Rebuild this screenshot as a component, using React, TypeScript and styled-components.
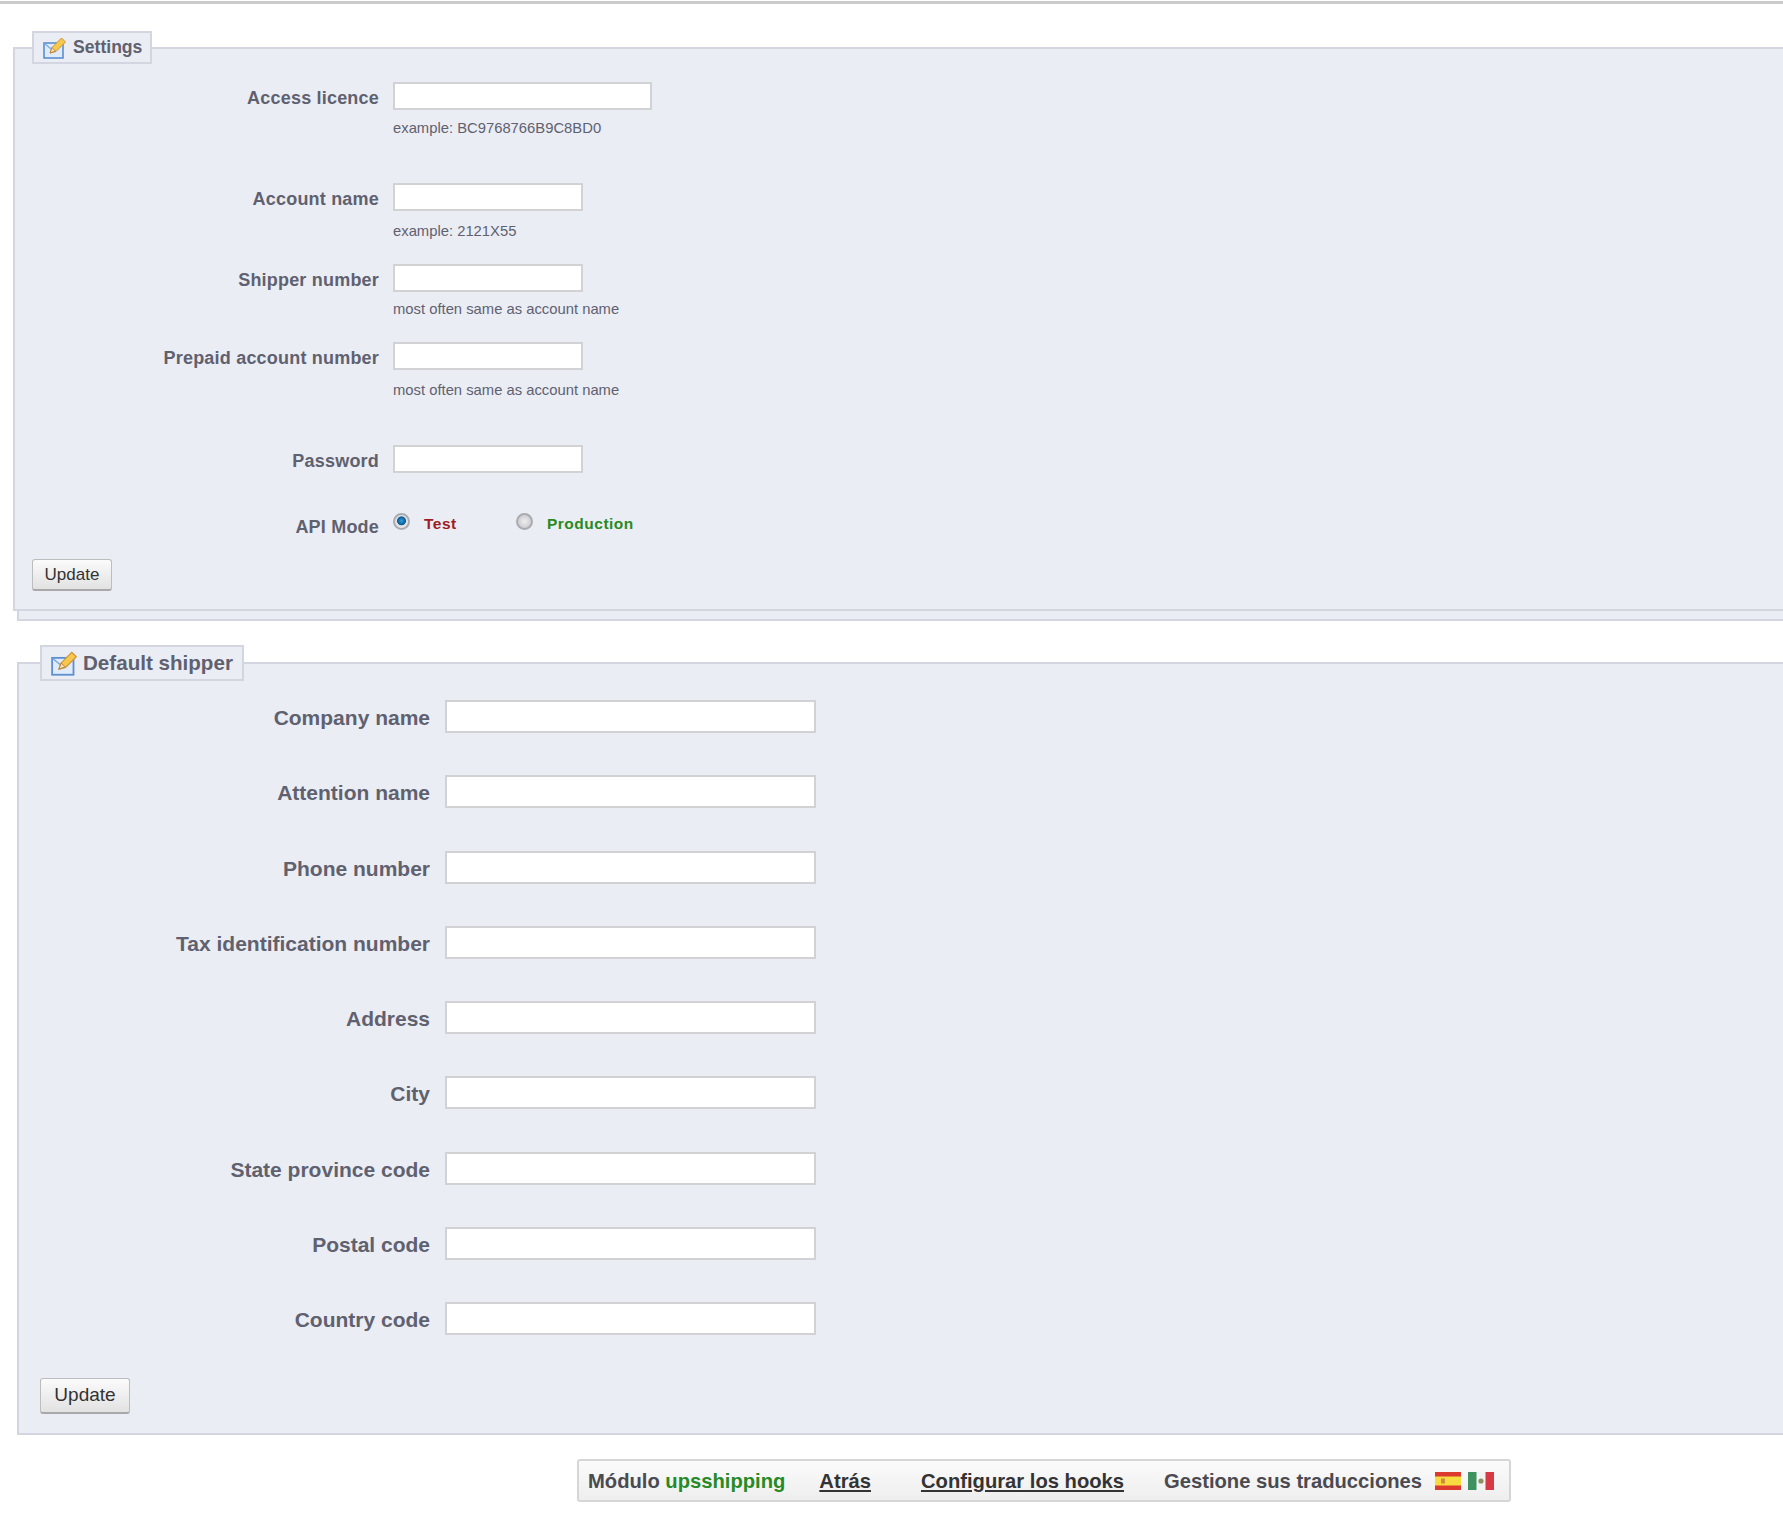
import React from 'react';
import styled, { createGlobalStyle } from 'styled-components';

const GlobalStyle = createGlobalStyle`
  html, body {
    margin: 0;
    padding: 0;
    background: #fff;
    overflow-x: hidden;
  }
  body {
    font-family: "Liberation Sans", Arial, sans-serif;
    color: #5f616f;
  }
`;

const Page = styled.div`
  width: 1783px;
  height: 1514px;
  overflow: hidden;
  border-top: 3px solid #cbcbcb;
  margin-top: 1px;
  box-sizing: border-box;
  padding-top: 27px;
`;

const Backing = styled.div`
  display: flow-root;
  margin: 16px -20px 0 17px;
  background: #ebedf5;
  border-left: 2px solid #d3d6e0;
  border-bottom: 2px solid #d3d6e0;
  height: 574px;
  box-sizing: border-box;
`;

const Fieldset = styled.fieldset<{ $shift?: boolean; $pad: number; $top: number; $height: number }>`
  margin: ${(p) => (p.$shift ? '-16px 0 0 -6px' : 0)};
  padding: ${(p) => p.$top}px 0 0 ${(p) => p.$pad}px;
  min-width: 0;
  height: ${(p) => p.$height}px;
  box-sizing: border-box;
  background: #ebedf5;
  border: 2px solid #d3d6e0;
  border-right: none;
`;

const Legend = styled.legend<{ $big?: boolean }>`
  display: flex;
  align-items: center;
  box-sizing: border-box;
  height: ${(p) => (p.$big ? 36 : 33)}px;
  padding: 0 ${(p) => (p.$big ? 9 : 8)}px 0 9px;
  gap: ${(p) => (p.$big ? 5 : 6)}px;
  background: #ebedf5;
  border: 2px solid #d3d6e0;
  font-size: ${(p) => (p.$big ? 20.6 : 17.6)}px;
  font-weight: bold;
  color: #5f616f;
`;

const Row = styled.div<{ $height: number; $label: number; $gap: number }>`
  display: grid;
  grid-template-columns: ${(p) => p.$label}px 1fr;
  column-gap: ${(p) => p.$gap}px;
  height: ${(p) => p.$height}px;
`;

const Label = styled.label<{ $big?: boolean; $low?: boolean }>`
  text-align: right;
  font-size: ${(p) => (p.$big ? 21 : 18)}px;
  font-weight: bold;
  letter-spacing: ${(p) => (p.$big ? 0 : 0.2)}px;
  line-height: ${(p) => (p.$big ? 36 : p.$low ? 37 : 32)}px;
  color: #5f616f;
  white-space: nowrap;
`;

const TextInput = styled.input<{ $width: number; $big?: boolean }>`
  display: block;
  box-sizing: border-box;
  width: ${(p) => p.$width}px;
  height: ${(p) => (p.$big ? 33 : 28)}px;
  background: #fff;
  border: 2px solid #d2d2d4;
  padding: 0 4px;
  outline: none;
`;

const Hint = styled.div<{ $gap: number }>`
  margin-top: ${(p) => p.$gap}px;
  font-size: 14.8px;
  line-height: 16px;
  color: #5f616f;
  white-space: nowrap;
`;

const RadioGroup = styled.div`
  display: flex;
  align-items: flex-start;
  padding-top: 4px;
`;

const RadioDot = styled.input`
  appearance: none;
  flex: none;
  width: 17px;
  height: 17px;
  margin: 0 14px 0 0;
  border-radius: 50%;
  border: 2px solid #a9abb0;
  background: radial-gradient(circle at 50% 50%, #eeeeee 0, #cfcfd2 70%, #f4f4f4 100%);

  &:checked {
    background: radial-gradient(circle at 50% 45%, #2f9fd8 0, #0c5a96 42%, #dfe1e6 50%, #f2f2f4 100%);
  }
`;

const RadioText = styled.span<{ $color: string; $width: number }>`
  width: ${(p) => p.$width}px;
  margin-top: 1px;
  font-size: 15.5px;
  font-weight: bold;
  letter-spacing: 0.5px;
  line-height: 19px;
  color: ${(p) => p.$color};
`;

const Button = styled.button<{ $big?: boolean }>`
  display: block;
  box-sizing: border-box;
  width: ${(p) => (p.$big ? 90 : 80)}px;
  height: ${(p) => (p.$big ? 36 : 32)}px;
  margin-top: ${(p) => (p.$big ? 0 : 2)}px;
  padding: 0;
  font-family: "Liberation Sans", Arial, sans-serif;
  font-size: ${(p) => (p.$big ? 19 : 17)}px;
  color: #333;
  background: linear-gradient(#fbfbfb, #e2e2e2);
  border: 1px solid #bdbdbd;
  border-bottom: 2px solid #a8a8a8;
  border-radius: 3px;
`;

const Second = styled.div`
  margin: 24px -20px 0 17px;
`;

const Toolbar = styled.div`
  display: flex;
  align-items: center;
  box-sizing: border-box;
  width: 934px;
  height: 43px;
  margin: 24px 0 0 577px;
  padding: 1px 0 0 9px;
  background: linear-gradient(#fbfbfb, #eeeeee);
  border: 2px solid #d6d6d6;
  border-radius: 3px;
  font-size: 20.2px;
  font-weight: bold;
  color: #4a4a50;
  white-space: nowrap;
`;

const Green = styled.span`
  color: #268a26;
`;

const ToolLink = styled.a<{ $left: number }>`
  margin-left: ${(p) => p.$left}px;
  color: #333;
  text-decoration: underline;
`;

const ToolText = styled.span`
  margin-left: 40px;
  margin-right: 6px;
`;

const Flag = styled.svg`
  display: block;
  flex: none;
  width: 26px;
  height: 18px;
  margin-left: 7px;
`;

const EditIcon = ({ size }: { size: number }) => (
  <svg width={size} height={size - 2} viewBox="0 0 24 22">
    <rect x="1" y="6" width="19" height="15" fill="#dfeafb" stroke="#5b8fd0" strokeWidth="1.6" />
    <path d="M1.5 6.5 10.5 14l9-7.5" fill="none" stroke="#7da8dc" strokeWidth="1.2" />
    <path d="M7 16 9 10.5 18.5 1l4 4-9.5 9.5z" fill="#f6c84e" stroke="#cf9233" strokeWidth="1" />
    <path d="M7 16l2-5.5 3.6 3.6z" fill="#f6dfb4" stroke="#b07a30" strokeWidth=".8" />
  </svg>
);

const SpainFlag = () => (
  <Flag viewBox="0 0 26 18">
    <rect width="26" height="18" fill="#dc3a2e" />
    <rect y="4.5" width="26" height="9" fill="#f6dc3e" />
    <rect x="6" y="6.5" width="4" height="5" fill="#d08a3c" />
  </Flag>
);

const MexicoFlag = () => (
  <Flag viewBox="0 0 26 18">
    <rect width="26" height="18" fill="#f3f3f1" />
    <rect width="8.5" height="18" fill="#3f9160" />
    <rect x="17.5" width="8.5" height="18" fill="#d63a44" />
    <circle cx="13" cy="9" r="2.6" fill="#8d8f5e" />
  </Flag>
);

const SETTINGS = [
  { label: 'Access licence', width: 259, height: 101, gap: 10, hint: 'example: BC9768766B9C8BD0' },
  { label: 'Account name', width: 190, height: 81, gap: 12, hint: 'example: 2121X55' },
  { label: 'Shipper number', width: 190, height: 78, gap: 9, hint: 'most often same as account name' },
  { label: 'Prepaid account number', width: 190, height: 103, gap: 12, hint: 'most often same as account name' },
  { label: 'Password', width: 190, height: 64 }
];

const SHIPPER = [
  'Company name',
  'Attention name',
  'Phone number',
  'Tax identification number',
  'Address',
  'City',
  'State province code',
  'Postal code',
  'Country code'
];

const App: React.FC = () => {
  return (
    <>
      <GlobalStyle />
      <Page>
        <Backing>
          <Fieldset $shift $pad={17} $top={18} $height={580}>
            <Legend>
              <EditIcon size={24} />
              Settings
            </Legend>
            {SETTINGS.map((row) => (
              <Row key={row.label} $height={row.height} $label={347} $gap={14}>
                <Label>{row.label}</Label>
                <div>
                  <TextInput $width={row.width} />
                  {row.hint && <Hint $gap={row.gap}>{row.hint}</Hint>}
                </div>
              </Row>
            ))}
            <Row $height={48} $label={347} $gap={14}>
              <Label $low>API Mode</Label>
              <RadioGroup>
                <RadioDot type="radio" name="mode" defaultChecked />
                <RadioText $color="#a01c24" $width={92}>Test</RadioText>
                <RadioDot type="radio" name="mode" />
                <RadioText $color="#2a8a1e" $width={90}>Production</RadioText>
              </RadioGroup>
            </Row>
            <Button>Update</Button>
          </Fieldset>
        </Backing>
        <Second>
          <Fieldset $pad={21} $top={19} $height={790}>
            <Legend $big>
              <EditIcon size={27} />
              Default shipper
            </Legend>
            {SHIPPER.map((label) => (
              <Row key={label} $height={75.3} $label={390} $gap={15}>
                <Label $big>{label}</Label>
                <TextInput $width={371} $big />
              </Row>
            ))}
            <Button $big>Update</Button>
          </Fieldset>
        </Second>
        <Toolbar>
          <span>
            Módulo <Green>upsshipping</Green>
          </span>
          <ToolLink $left={34} href="#">Atrás</ToolLink>
          <ToolLink $left={50} href="#">Configurar los hooks</ToolLink>
          <ToolText>Gestione sus traducciones</ToolText>
          <SpainFlag />
          <MexicoFlag />
        </Toolbar>
      </Page>
    </>
  );
};

export default App;
